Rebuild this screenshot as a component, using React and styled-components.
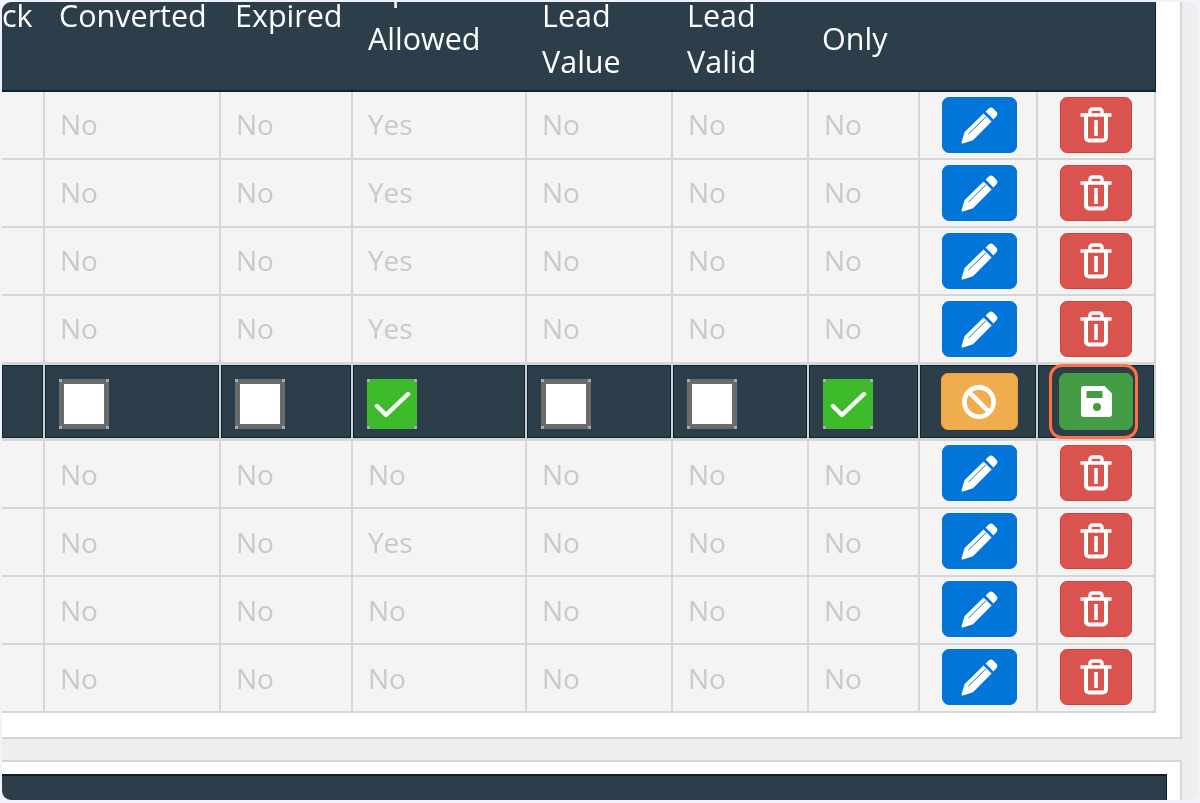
import React from 'react';
import styled, { createGlobalStyle } from 'styled-components';

const Global = createGlobalStyle`
  html, body { margin: 0; padding: 0; background: #f3f2fa; }
  #root { width: 1200px; height: 803px; overflow: hidden; }
`;
const Frame = styled.div`
  margin: 2px; height: 798px; width: 1195px; overflow: hidden;
  border-radius: 9px; background: #eeeeee; font-family: "Open Sans", "Noto Sans", sans-serif;
  filter: blur(0.45px);
`;
const Panel = styled.section`
  box-sizing: border-box; width: 1180px; height: 737px; background: #fff;
  border-right: 2px solid #d5d5d5; border-bottom: 2px solid #d5d5d5;
`;
const Table = styled.table`
  border-collapse: separate; border-spacing: 0; table-layout: fixed; width: 1154px;
`;
const Head = styled.th`
  box-sizing: border-box; height: 90px; padding: 0 0 0 ${p => p.$left}px;
  background: #2c3e49; border-bottom: 2px solid #0f2433; color: #fff;
  font-weight: 500; font-size: 30.5px; line-height: 46px; letter-spacing: 0;
  text-align: left; vertical-align: top; overflow: hidden; white-space: nowrap;
  &:last-child { border-right: 1px solid #0f2433; }
`;
const HeadLines = styled.div`
  margin-top: ${p => p.$shift}px;
`;
const HeadLine = styled.div`
  margin-bottom: ${p => p.$raise ? 3 : 0}px;
`;
const Cell = styled.td`
  box-sizing: border-box; height: 68px; padding: 0 0 ${p => p.$below ? 0 : 2}px 15px; background: #f4f4f4;
  border-right: 2px solid #d6d6d6; border-bottom: 2px solid #d6d6d6;
  color: #c9c9c9; font-size: 28px; letter-spacing: -0.1px; vertical-align: middle;
`;
const ButtonCell = styled(Cell)`
  padding: 0 0 ${p => p.$below ? 2 : 0}px ${p => p.$pad ?? 0}px; text-align: center;
`;
const EditCell = styled.td`
  box-sizing: border-box; height: 77px; padding: 0 0 0 13.5px; background: #2c3e49;
  border-top: 1px solid #dcdcdc; border-right: 2px solid #cfcfcf; border-bottom: 3px solid #d6d6d6;
  box-shadow: inset 0 0 0 1px #0f2433; vertical-align: middle;
`;
const EditButtonCell = styled(EditCell)`
  position: relative; padding: 0 0 0 ${p => p.$pad ?? 0}px; text-align: center;
`;
const Btn = styled.button`
  display: inline-flex; align-items: center; justify-content: center; vertical-align: middle;
  box-sizing: border-box; width: ${p => p.$w}px; height: ${p => p.$h}px; padding: 0;
  border: 1px solid ${p => p.$edge}; border-radius: 7px; background: ${p => p.$bg}; color: #fff;
`;
const Ring = styled.div`
  position: absolute; left: 11px; top: -1px; width: 89px; height: 75px; box-sizing: border-box;
  border: 3px solid #ff7043; border-radius: 13px;
`;
const Check = styled.span`
  position: relative; display: inline-flex; align-items: center; justify-content: center;
  vertical-align: middle; margin-top: 4px;
  box-sizing: border-box; width: 50px; height: 50px; background: ${p => p.$on ? '#3dbb2a' : '#fff'};
  border: 5px solid ${p => p.$on ? '#3dbb2a' : '#6b6b6b'};
  &::after {
    content: ''; position: absolute; inset: -5px;
    background:
      linear-gradient(#adadad, #adadad) 0 0 / 3px 3px no-repeat,
      linear-gradient(#adadad, #adadad) 100% 0 / 3px 3px no-repeat,
      linear-gradient(#adadad, #adadad) 0 100% / 3px 3px no-repeat,
      linear-gradient(#adadad, #adadad) 100% 100% / 3px 3px no-repeat;
  }
`;
const Gap = styled.div`
  height: 21px;
`;
const Second = styled.section`
  box-sizing: border-box; width: 1180px; height: 42px; padding-top: 12px; background: #fff;
  border-top: 2px solid #d5d5d5; border-right: 2px solid #d5d5d5;
`;
const Bar = styled.div`
  width: 1165px; height: 40px; box-sizing: border-box; background: #2c3e49;
  border-top: 2px solid #0f1c2a; border-right: 1px solid #0f1c2a;
`;

const Pencil = () => (
  <svg width="37" height="37" viewBox="0 0 37 37">
    <path fill="#fff" d="M27.5 1.8a3.6 3.6 0 0 1 5 0l2.7 2.7a3.6 3.6 0 0 1 0 5L32.4 12.4 24.6 4.6zM22.6 6.4l8 8L12 33.2 2 36.4a1 1 0 0 1-1.4-1.3L3.6 25z" />
    <path stroke="#0275d8" strokeWidth="1" fill="none" d="M7.4 27.2L25.2 9.6" />
  </svg>
);
const Trash = () => (
  <svg width="32" height="36" viewBox="0 0 32 36" fill="none" stroke="#fff">
    <path strokeWidth="3.4" d="M0.5 8h31M10 8V4.5A2.5 2.5 0 0 1 12.5 2h7A2.5 2.5 0 0 1 22 4.5V8" />
    <path strokeWidth="4" d="M6 8v22.5a3 3 0 0 0 3 3h14a3 3 0 0 0 3-3V8" />
    <path strokeWidth="3.6" d="M16 13v16" />
  </svg>
);
const Ban = () => (
  <svg width="36" height="36" viewBox="0 0 36 36" fill="none" stroke="#fff" strokeWidth="4.6">
    <circle cx="18" cy="18" r="14.6" /><path d="M7.8 7.8l20.4 20.4" />
  </svg>
);
const Save = () => (
  <svg width="33" height="33" viewBox="0 0 33 33">
    <path fill="#fff" d="M1 4a3 3 0 0 1 3-3h20.5L32 8.5V29a3 3 0 0 1-3 3H4a3 3 0 0 1-3-3z" />
    <rect x="6.5" y="6" width="16" height="7" fill="#449d44" />
    <circle cx="17" cy="22" r="4" fill="#449d44" />
  </svg>
);
const Tick = () => (
  <svg width="38" height="38" viewBox="0 0 38 38" fill="none" stroke="#fff" strokeWidth="4.4" strokeLinecap="round" strokeLinejoin="round">
    <path d="M4 21l9 9L35 9" />
  </svg>
);

const widths = [43, 176, 132, 174, 146, 136, 111, 118, 118];
const heads = [
  { left: 0, shift: -10, lines: ['ck'] },
  { left: 14, shift: -10, lines: ['Converted'] },
  { left: 14, shift: -10, lines: ['Expired'] },
  { left: 15, shift: -36, lines: ['Opt', 'Allowed'], raise: true },
  { left: 15, shift: -10, lines: ['Lead', 'Value'] },
  { left: 14, shift: -10, lines: ['Lead', 'Valid'] },
  { left: 13, shift: 13, lines: ['Only'] },
  { left: 0, shift: 0, lines: [] },
  { left: 0, shift: 0, lines: [] },
];
const yes = ['No', 'No', 'Yes', 'No', 'No', 'No'];
const no = ['No', 'No', 'No', 'No', 'No', 'No'];
const rows = [yes, yes, yes, yes, 'edit', no, yes, no, no];
const editChecks = [false, false, true, false, false, true];

export default function App() {
  return (
    <Frame>
      <Global />
      <Panel>
        <Table>
          <colgroup>{widths.map((w, i) => <col key={i} style={{ width: w }} />)}</colgroup>
          <thead>
            <tr>
              {heads.map((h, i) => (
                <Head key={i} $left={h.left}>
                  <HeadLines $shift={h.shift}>
                    {h.lines.map((l, k) => <HeadLine key={l} $raise={h.raise && k === 0}>{l}</HeadLine>)}
                  </HeadLines>
                </Head>
              ))}
            </tr>
          </thead>
          <tbody>
            {rows.map((r, i) => r === 'edit' ? (
              <tr key={i}>
                <EditCell />
                {editChecks.map((c, j) => (
                  <EditCell key={j}><Check $on={c}>{c && <Tick />}</Check></EditCell>
                ))}
                <EditButtonCell $pad={2}><Btn $w={77} $h={57} $bg="#f0ad4e" $edge="#eea236"><Ban /></Btn></EditButtonCell>
                <EditButtonCell>
                  <Btn $w={74} $h={57} $bg="#449d44" $edge="#449d44"><Save /></Btn>
                  <Ring />
                </EditButtonCell>
              </tr>
            ) : (
              <tr key={i}>
                <Cell $below={i > 4} />
                {r.map((v, j) => <Cell key={j} $below={i > 4}>{v}</Cell>)}
                <ButtonCell $pad={2} $below={i > 4}><Btn $w={75} $h={56} $bg="#0275d8" $edge="#0275d8"><Pencil /></Btn></ButtonCell>
                <ButtonCell $below={i > 4}><Btn $w={72} $h={56} $bg="#d9534f" $edge="#d43f3a"><Trash /></Btn></ButtonCell>
              </tr>
            ))}
          </tbody>
        </Table>
      </Panel>
      <Gap />
      <Second><Bar /></Second>
    </Frame>
  );
}
